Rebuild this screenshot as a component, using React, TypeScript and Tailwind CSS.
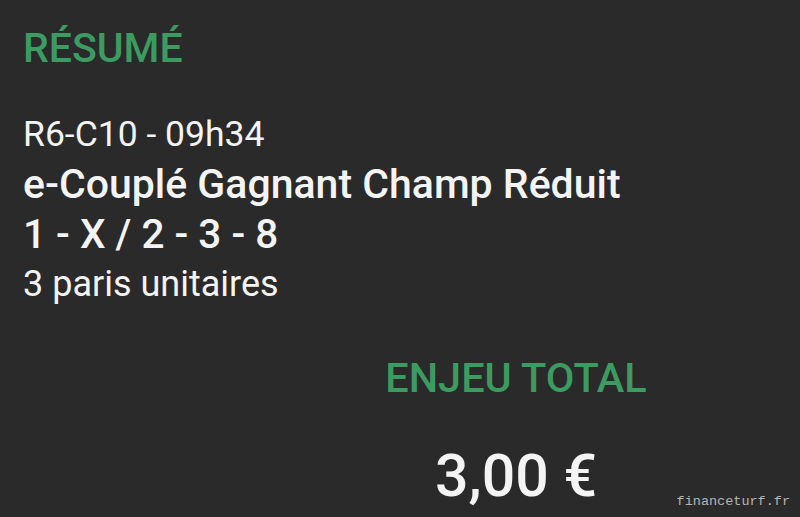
const green = "text-[#3b9b60]";

function App() {
    return (
        <div className="relative h-[517px] w-[800px] overflow-hidden bg-[#2a2a2a] font-['Roboto',sans-serif] text-[#f4f4f4]">
            <div className="pl-[23px] pt-[23px]">
                <h2 className={`${green} text-[41px] font-medium leading-[50px]`}>RÉSUMÉ</h2>

                <div className="mt-[36px]">
                    <p className="text-[35.5px] leading-[50px]">R6-C10 - 09h34</p>
                    <p className="text-[41px] font-medium leading-[50px]">e-Couplé Gagnant Champ Réduit</p>
                    <p className="text-[40.5px] font-medium leading-[50px]">1 - X / 2 - 3 - 8</p>
                    <p className="text-[36px] leading-[50px]">3 paris unitaires</p>
                </div>
            </div>

            <div className="mt-[44px] flex justify-end">
                <div className="w-[568px] text-center">
                    <h3 className={`${green} text-[41.5px] font-medium leading-[50px]`}>ENJEU TOTAL</h3>
                    <p className="mt-[38px] text-[59px] font-medium leading-[70px]">3,00 €</p>
                </div>
            </div>

            <span className="absolute bottom-[9px] right-[10px] font-['Liberation_Mono',monospace] text-[13.5px] leading-none text-[#b5b5b5]">
                financeturf.fr
            </span>
        </div>
    );
}

export default App;
